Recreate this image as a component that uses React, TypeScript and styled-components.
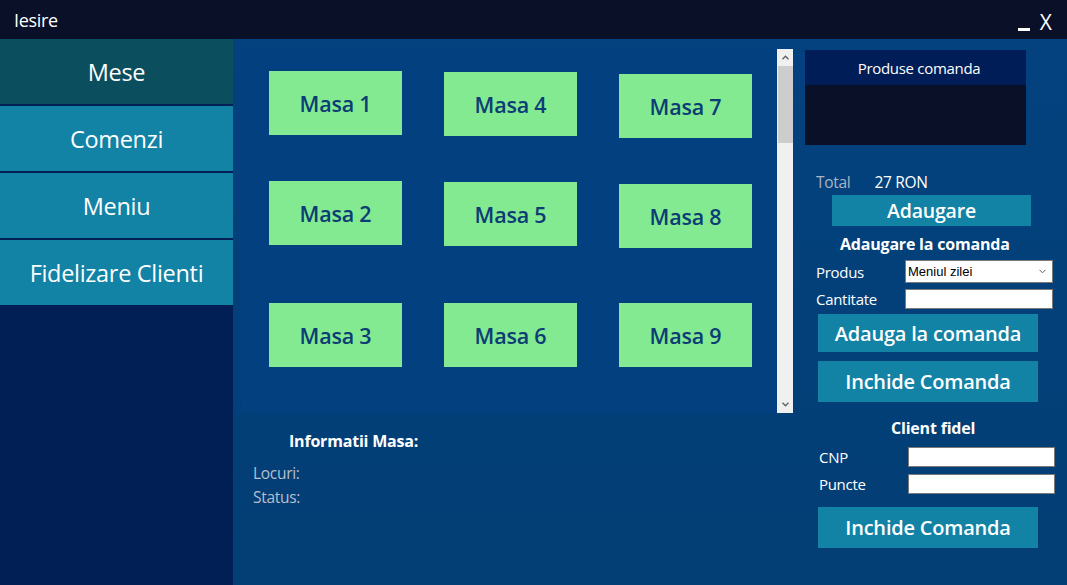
import React from "react";
import styled, { createGlobalStyle } from "styled-components";

const GlobalStyle = createGlobalStyle`
  html, body { margin: 0; padding: 0; background: #0b1029; }
  body { font-family: "Open Sans", "Noto Sans", sans-serif; }
  * { box-sizing: border-box; }
`;

const Window = styled.div`
  width: 1067px;
  height: 585px;
  display: flex;
  flex-direction: column;
  overflow: hidden;
`;

const TitleBar = styled.div`
  height: 39px;
  flex: none;
  background: #0b1029;
  display: flex;
  align-items: center;
  justify-content: space-between;
  padding: 1px 15px 0 14px;
  color: #ffffff;
`;

const TitleText = styled.span`
  font-size: 18px;
  letter-spacing: -0.3px;
`;

const WinControls = styled.div`
  display: flex;
  align-items: flex-end;
  gap: 10px;
  padding-top: 3px;
`;

const MinimizeBar = styled.span`
  width: 12px;
  height: 3px;
  background: #ffffff;
  margin-bottom: 1px;
`;

const CloseGlyph = styled.span`
  font-size: 21px;
  line-height: 20px;
  font-weight: 400;
`;

const Body = styled.div`
  flex: 1;
  display: flex;
  min-height: 0;
`;

const Sidebar = styled.nav`
  width: 233px;
  flex: none;
  background: #011f55;
  display: flex;
  flex-direction: column;
  gap: 2px;
`;

const NavButton = styled.div<{ $active?: boolean }>`
  height: 65px;
  display: flex;
  align-items: center;
  justify-content: center;
  background: ${(p) => (p.$active ? "#0b4e5e" : "#1282a5")};
  color: #ffffff;
  font-size: 23.5px;
  letter-spacing: -0.3px;
`;

const Main = styled.div`
  flex: 1;
  display: flex;
  background: linear-gradient(180deg, #03427f 0%, #033e74 100%);
`;

const LeftCol = styled.div`
  width: 560px;
  flex: none;
  padding: 10px 0 0 8px;
  display: flex;
  flex-direction: column;
`;

const TablesPanel = styled.div`
  width: 552px;
  height: 364px;
  display: flex;
  background: #03407f;
`;

const TilesGrid = styled.div`
  flex: 1;
  display: grid;
  grid-auto-flow: column;
  grid-template-columns: repeat(3, 133px);
  grid-template-rows: 110px 122px 64px;
  column-gap: 42px;
  align-items: start;
  padding: 22px 0 0 28px;
`;

const Tile = styled.div<{ $nudge: number }>`
  width: 133px;
  height: 64px;
  margin-top: ${(p) => p.$nudge}px;
  background: #83ea92;
  color: #0c3d74;
  display: flex;
  align-items: center;
  justify-content: center;
  font-size: 21.5px;
  font-weight: 600;
  letter-spacing: -0.2px;
`;

const Scrollbar = styled.div`
  width: 16px;
  flex: none;
  background: #f0f0f0;
  display: flex;
  flex-direction: column;
  align-items: center;
`;

const ScrollArrow = styled.div`
  height: 17px;
  width: 100%;
  display: flex;
  align-items: center;
  justify-content: center;
  flex: none;
`;

const ScrollThumb = styled.div`
  width: 15px;
  height: 77px;
  background: #cdcdcd;
  flex: none;
`;

const ScrollTrack = styled.div`
  flex: 1;
`;

const Info = styled.div`
  padding: 18px 0 0 12px;
  display: flex;
  flex-direction: column;
`;

const InfoTitle = styled.div`
  font-size: 16px;
  font-weight: 700;
  color: #ffffff;
  line-height: 20px;
  padding-left: 36px;
  margin-bottom: 12px;
  letter-spacing: -0.2px;
`;

const InfoLine = styled.div`
  font-size: 15.5px;
  color: #b5bfcf;
  line-height: 20px;
  margin-bottom: 4px;
  letter-spacing: -0.3px;
`;

const RightCol = styled.div`
  width: 262px;
  flex: none;
  padding: 11px 0 0 12px;
  display: flex;
  flex-direction: column;
`;

const ListHeader = styled.div`
  width: 221px;
  height: 35px;
  background: #001d57;
  color: #ffffff;
  font-size: 15px;
  display: flex;
  align-items: center;
  justify-content: center;
  padding-left: 7px;
  letter-spacing: -0.3px;
`;

const ListBody = styled.div`
  width: 221px;
  height: 60px;
  background: #0b1029;
`;

const TotalRow = styled.div`
  margin: 27px 0 0 11px;
  height: 20px;
  display: flex;
  align-items: center;
  gap: 24px;
  font-size: 15.5px;
  letter-spacing: -0.3px;
`;

const TotalLabel = styled.span`
  color: #a9b4c4;
`;

const TotalValue = styled.span`
  color: #ffffff;
`;

const ActionButton = styled.div<{ $h: number; $w: number; $mt: number; $ml: number; $fs: number }>`
  width: ${(p) => p.$w}px;
  height: ${(p) => p.$h}px;
  margin: ${(p) => p.$mt}px 0 0 ${(p) => p.$ml}px;
  background: #1282a5;
  color: #ffffff;
  font-size: ${(p) => p.$fs}px;
  font-weight: 600;
  display: flex;
  align-items: center;
  justify-content: center;
  letter-spacing: -0.2px;
`;

const SectionTitle = styled.div<{ $mt: number; $ml: number }>`
  margin: ${(p) => p.$mt}px 0 0 ${(p) => p.$ml}px;
  height: 20px;
  line-height: 20px;
  font-size: 16px;
  font-weight: 700;
  color: #ffffff;
  letter-spacing: -0.2px;
`;

const FieldRow = styled.div<{ $mt: number; $ml: number; $h: number }>`
  margin: ${(p) => p.$mt}px 0 0 ${(p) => p.$ml}px;
  height: ${(p) => p.$h}px;
  display: flex;
  align-items: center;
`;

const FieldLabel = styled.span`
  width: 89px;
  flex: none;
  font-size: 15px;
  color: #ffffff;
  letter-spacing: -0.3px;
`;

const TextBox = styled.div`
  width: 148px;
  height: 100%;
  background: #ffffff;
  border: 1px solid #7a7a7a;
`;

const SelectBox = styled.div`
  width: 148px;
  height: 100%;
  background: #ffffff;
  border: 1px solid #7a7a7a;
  display: flex;
  align-items: center;
  justify-content: space-between;
  padding: 0 5px 0 2px;
  font-family: "Liberation Sans", Arial, sans-serif;
  font-size: 13px;
  color: #000000;
`;

const Chevron = ({ up, w = 7, sw = 1.3 }: { up?: boolean; w?: number; sw?: number }) => (
  <svg width={w} height="5" viewBox="0 0 7 5">
    <path
      d={up ? "M0.5 4.2 L3.5 1.2 L6.5 4.2" : "M0.5 0.8 L3.5 3.8 L6.5 0.8"}
      fill="none"
      stroke="#606060"
      strokeWidth={sw}
    />
  </svg>
);

const tiles = [
  { name: "Masa 1", nudge: 0 },
  { name: "Masa 2", nudge: 0 },
  { name: "Masa 3", nudge: 0 },
  { name: "Masa 4", nudge: 1 },
  { name: "Masa 5", nudge: 1 },
  { name: "Masa 6", nudge: 0 },
  { name: "Masa 7", nudge: 3 },
  { name: "Masa 8", nudge: 3 },
  { name: "Masa 9", nudge: 0 },
];

export default function App() {
  return (
    <>
      <GlobalStyle />
      <Window>
        <TitleBar>
          <TitleText>Iesire</TitleText>
          <WinControls>
            <MinimizeBar />
            <CloseGlyph>X</CloseGlyph>
          </WinControls>
        </TitleBar>
        <Body>
          <Sidebar>
            <NavButton $active>Mese</NavButton>
            <NavButton>Comenzi</NavButton>
            <NavButton>Meniu</NavButton>
            <NavButton>Fidelizare Clienti</NavButton>
          </Sidebar>
          <Main>
            <LeftCol>
              <TablesPanel>
                <TilesGrid>
                  {tiles.map((t) => (
                    <Tile key={t.name} $nudge={t.nudge}>
                      {t.name}
                    </Tile>
                  ))}
                </TilesGrid>
                <Scrollbar>
                  <ScrollArrow>
                    <Chevron up />
                  </ScrollArrow>
                  <ScrollThumb />
                  <ScrollTrack />
                  <ScrollArrow>
                    <Chevron />
                  </ScrollArrow>
                </Scrollbar>
              </TablesPanel>
              <Info>
                <InfoTitle>Informatii Masa:</InfoTitle>
                <InfoLine>Locuri:</InfoLine>
                <InfoLine>Status:</InfoLine>
              </Info>
            </LeftCol>
            <RightCol>
              <ListHeader>Produse comanda</ListHeader>
              <ListBody />
              <TotalRow>
                <TotalLabel>Total</TotalLabel>
                <TotalValue>27 RON</TotalValue>
              </TotalRow>
              <ActionButton $w={199} $h={31} $mt={3} $ml={27} $fs={19.5}>
                Adaugare
              </ActionButton>
              <SectionTitle $mt={8} $ml={35}>Adaugare la comanda</SectionTitle>
              <FieldRow $mt={6} $ml={11} $h={23}>
                <FieldLabel>Produs</FieldLabel>
                <SelectBox>
                  <span>Meniul zilei</span>
                  <Chevron w={9} sw={1} />
                </SelectBox>
              </FieldRow>
              <FieldRow $mt={6} $ml={11} $h={20}>
                <FieldLabel>Cantitate</FieldLabel>
                <TextBox />
              </FieldRow>
              <ActionButton $w={220} $h={38} $mt={5} $ml={13} $fs={20}>
                Adauga la comanda
              </ActionButton>
              <ActionButton $w={220} $h={41} $mt={9} $ml={13} $fs={20}>
                Inchide Comanda
              </ActionButton>
              <SectionTitle $mt={16} $ml={86}>Client fidel</SectionTitle>
              <FieldRow $mt={9} $ml={14} $h={20}>
                <FieldLabel>CNP</FieldLabel>
                <TextBox />
              </FieldRow>
              <FieldRow $mt={7} $ml={14} $h={20}>
                <FieldLabel>Puncte</FieldLabel>
                <TextBox />
              </FieldRow>
              <ActionButton $w={220} $h={41} $mt={13} $ml={13} $fs={20}>
                Inchide Comanda
              </ActionButton>
            </RightCol>
          </Main>
        </Body>
      </Window>
    </>
  );
}
